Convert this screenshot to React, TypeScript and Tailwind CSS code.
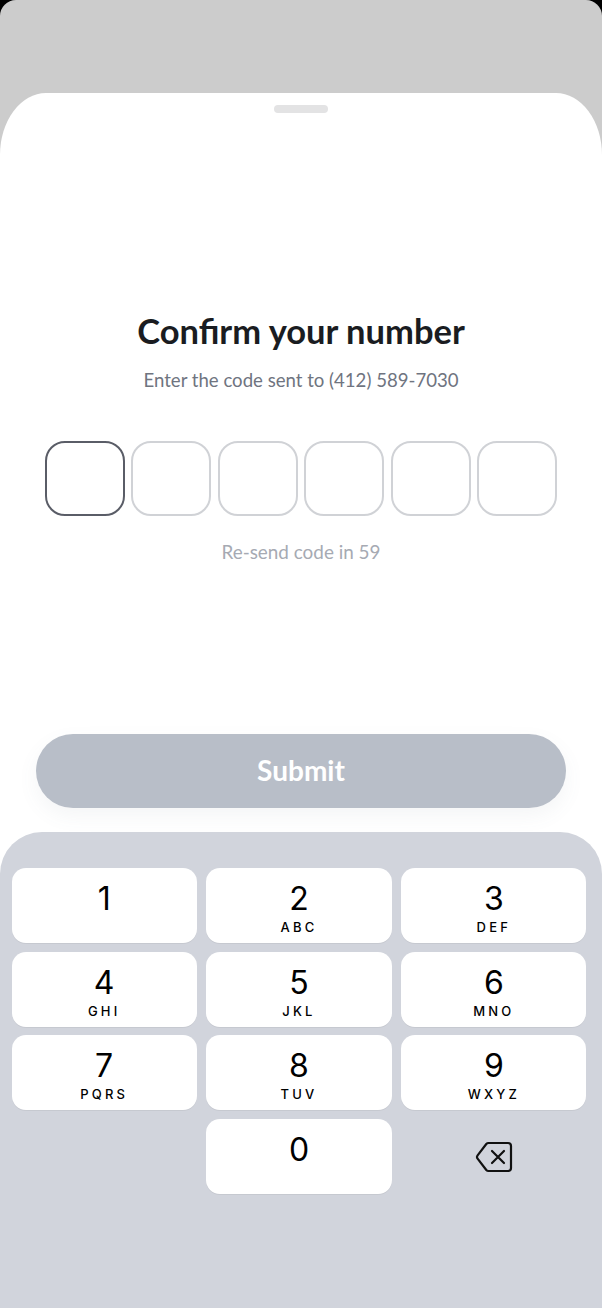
import React from "react";

const keys = [
  { digit: "1", letters: "" },
  { digit: "2", letters: "ABC" },
  { digit: "3", letters: "DEF" },
  { digit: "4", letters: "GHI" },
  { digit: "5", letters: "JKL" },
  { digit: "6", letters: "MNO" },
  { digit: "7", letters: "PQRS" },
  { digit: "8", letters: "TUV" },
  { digit: "9", letters: "WXYZ" },
];

const Key = ({ digit, letters }: { digit: string; letters: string }) => (
  <div className="h-[75px] bg-white rounded-[14px] flex flex-col items-center pt-[12px] shadow-[0_1px_0_rgba(0,0,0,0.05)]">
    <span className="text-[32px] leading-[38px] text-black">{digit}</span>
    <span className="mt-[1px] text-[13px] leading-[16px] font-medium tracking-[3.2px] text-black">{letters}</span>
  </div>
);

const BackspaceIcon = () => (
  <svg width="38" height="32" viewBox="0 0 38 32" fill="none" stroke="#111" strokeWidth="2.2" strokeLinecap="round" strokeLinejoin="round">
    <path d="M13.5 2H33a3 3 0 0 1 3 3v22a3 3 0 0 1-3 3H13.5a3 3 0 0 1-2.2-1L2.6 17.6a2.6 2.6 0 0 1 0-3.2L11.3 3a3 3 0 0 1 2.2-1z" />
    <path d="M17 10l12 12M29 10L17 22" />
  </svg>
);

export default function App() {
  return (
    <div className="w-[602px] h-[1308px] bg-black overflow-hidden font-['Inter',sans-serif]">
      <div className="h-full bg-[#cccccc] rounded-t-[16px] pt-[93px]">
        <div className="h-full bg-white rounded-tl-[46px_62px] rounded-tr-[46px_62px] flex flex-col">
          <div className="self-center mt-[12px] w-[54px] h-[8px] rounded-[4px] bg-[#e3e3e4]" />

          <h1 className="mt-[198px] text-center text-[34.5px] leading-[40px] font-bold text-[#1a1c21] font-['Lato',sans-serif]">
            Confirm your number
          </h1>
          <p className="mt-[17px] text-center text-[18.6px] leading-[24px] text-[#6f7480] font-['Lato',sans-serif]">
            Enter the code sent to (412) 589-7030
          </p>

          <div className="mt-[49px] px-[45px] grid grid-cols-6 gap-[6.5px]">
            <div className="h-[75px] rounded-[20px] border-2 border-[#5a5d67]" />
            {[1, 2, 3, 4, 5].map((n) => (
              <div key={n} className="h-[75px] rounded-[20px] border-2 border-[#d0d2d6]" />
            ))}
          </div>

          <p className="mt-[24px] text-center text-[18.9px] leading-[24px] text-[#a6aab3] font-['Lato',sans-serif]">
            Re-send code in 59
          </p>

          <div className="mt-[170px] mx-[36px] h-[74px] rounded-[37px] bg-[#b8bec8] flex items-center justify-center pb-[3px] shadow-[0_8px_20px_rgba(100,110,130,0.07)]">
            <span className="text-[28px] font-bold text-white font-['Lato',sans-serif]">Submit</span>
          </div>

          <div className="mt-[24px] flex-1 bg-[#d1d4dc] rounded-t-[42px] pl-[11.5px] pr-[15.5px] pt-[36px]">
            <div className="grid grid-cols-3 gap-x-[9.5px] gap-y-[8.7px]">
              {keys.map((k) => (
                <Key key={k.digit} digit={k.digit} letters={k.letters} />
              ))}
              <div />
              <Key digit="0" letters="" />
              <div className="flex items-center justify-center">
                <BackspaceIcon />
              </div>
            </div>
          </div>
        </div>
      </div>
    </div>
  );
}
